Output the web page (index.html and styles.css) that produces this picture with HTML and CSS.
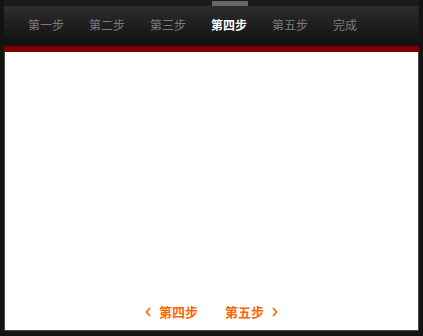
FILE: index.html
```html
<!DOCTYPE html>
<html lang="zh-CN">
<head>
<meta charset="utf-8">
<title>步骤</title>
<link rel="stylesheet" href="styles.css">
</head>
<body>
<div class="frame">
  <nav class="steps">
    <span class="step">第一步</span>
    <span class="step">第二步</span>
    <span class="step">第三步</span>
    <span class="step active">第四步</span>
    <span class="step">第五步</span>
    <span class="step">完成</span>
  </nav>
  <div class="redbar"></div>
  <main class="content">
    <div class="pager">
      <a class="pager-link prev"><svg class="chev" width="6" height="10" viewBox="0 0 6 10"><polyline points="5,1 1.5,5 5,9" fill="none" stroke="currentColor" stroke-width="1.6"/></svg>第四步</a>
      <a class="pager-link next">第五步<svg class="chev" width="6" height="10" viewBox="0 0 6 10"><polyline points="1,1 4.5,5 1,9" fill="none" stroke="currentColor" stroke-width="1.6"/></svg></a>
    </div>
  </main>
</div>
</body>
</html>
```
FILE: styles.css
```css
html, body {
  margin: 0;
  padding: 0;
  background: #131313;
  width: 423px;
  height: 336px;
  overflow: hidden;
  font-family: "Noto Sans CJK SC", "Noto Sans", sans-serif;
}
.frame {
  margin-left: 4px;
  width: 415px;
  display: flex;
  flex-direction: column;
}
.steps {
  display: flex;
  gap: 25px;
  padding: 6px 0 0 24px;
  height: 37px;
  background: linear-gradient(to bottom, #1b1b1b 0, #1b1b1b 6px, #2d2d2d 6px, #111111 43px);
}
.step {
  position: relative;
  font-size: 12px;
  line-height: 37px;
  color: #7c7c7c;
  white-space: nowrap;
}
.step.active {
  color: #ffffff;
  font-weight: bold;
}
.step.active::before {
  content: "";
  position: absolute;
  left: 1px;
  right: -1px;
  top: -5px;
  height: 5px;
  background: #666666;
}
.redbar {
  margin-top: 3px;
  height: 6px;
  background: #7a0000;
}
.content {
  background: #ffffff;
  border: 1px solid #4a4a4a;
  border-top: none;
  height: 278px;
  display: flex;
  flex-direction: column;
}
.pager {
  margin-top: auto;
  margin-bottom: 8px;
  display: flex;
  justify-content: center;
  gap: 27px;
}
.pager-link {
  display: flex;
  align-items: center;
  color: #ff6600;
  font-size: 13px;
  font-weight: bold;
  line-height: 20px;
  cursor: pointer;
}
.prev .chev { margin-right: 8px; }
.next .chev { margin-left: 8px; }
```
